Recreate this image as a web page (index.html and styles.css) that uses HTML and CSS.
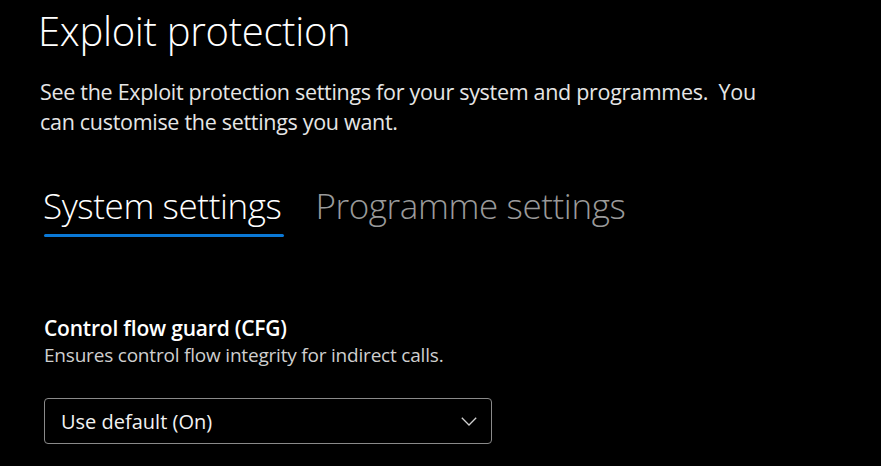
FILE: index.html
```html
<!DOCTYPE html>
<html lang="en">
<head>
<meta charset="utf-8">
<title>Exploit protection</title>
<link rel="stylesheet" href="styles.css">
</head>
<body>
<main class="page">
  <h1 class="title">Exploit protection</h1>
  <p class="intro">See the Exploit protection settings for your system and programmes.&nbsp; You can customise the settings you want.</p>
  <nav class="tabs">
    <div class="tab active">System settings</div>
    <div class="tab">Programme settings</div>
  </nav>
  <section class="setting">
    <h2 class="setting-title">Control flow guard (CFG)</h2>
    <p class="setting-desc">Ensures control flow integrity for indirect calls.</p>
    <div class="select">
      <span class="select-value">Use default (On)</span>
      <svg class="chevron" width="16" height="9" viewBox="0 0 16 9"><path d="M0.8 0.8 L8 8 L15.2 0.8" fill="none" stroke="#d0d0d0" stroke-width="1.3"/></svg>
    </div>
  </section>
</main>
</body>
</html>
```
FILE: styles.css
```css
html, body {
  margin: 0;
  padding: 0;
  background: #000;
  overflow: hidden;
}
body {
  font-family: "Segoe UI", "Open Sans", "Noto Sans", sans-serif;
  color: #fff;
}
.page {
  padding: 0 0 0 38px;
}
.title {
  margin: 0;
  padding-top: 5px;
  font-size: 40px;
  font-weight: 300;
  line-height: 52px;
  letter-spacing: -0.3px;
}
.intro {
  margin: 20px 0 0 2px;
  width: 740px;
  font-size: 21.5px;
  line-height: 30px;
  color: #e6e6e6;
  letter-spacing: -0.3px;
}
.tabs {
  display: flex;
  gap: 34px;
  margin: 45px 0 0 5px;
}
.tab {
  font-size: 35px;
  font-weight: 300;
  line-height: 46px;
  color: #9a9a9a;
  letter-spacing: -0.4px;
  padding-bottom: 8px;
  padding-top: 1px;
  position: relative;
}
.tab.active {
  color: #fff;
}
.tab.active::after {
  content: "";
  position: absolute;
  left: 1px;
  right: -3px;
  bottom: 0;
  height: 3px;
  border-radius: 2px;
  background: #0a78d6;
}
.setting {
  margin: 77px 0 0 6px;
}
.setting-title {
  margin: 0;
  font-size: 21px;
  font-weight: 600;
  line-height: 28px;
  letter-spacing: -0.2px;
}
.setting-desc {
  margin: 0;
  font-size: 19px;
  line-height: 26px;
  color: #cfcfcf;
  letter-spacing: -0.2px;
}
.select {
  margin-top: 30px;
  width: 448px;
  height: 46px;
  box-sizing: border-box;
  border: 1.5px solid #8a8a8a;
  border-radius: 4px;
  display: flex;
  align-items: center;
  justify-content: space-between;
  padding: 0 14px 0 16px;
}
.select-value {
  font-size: 20px;
  color: #f2f2f2;
}
.chevron {
  display: block;
}
```
